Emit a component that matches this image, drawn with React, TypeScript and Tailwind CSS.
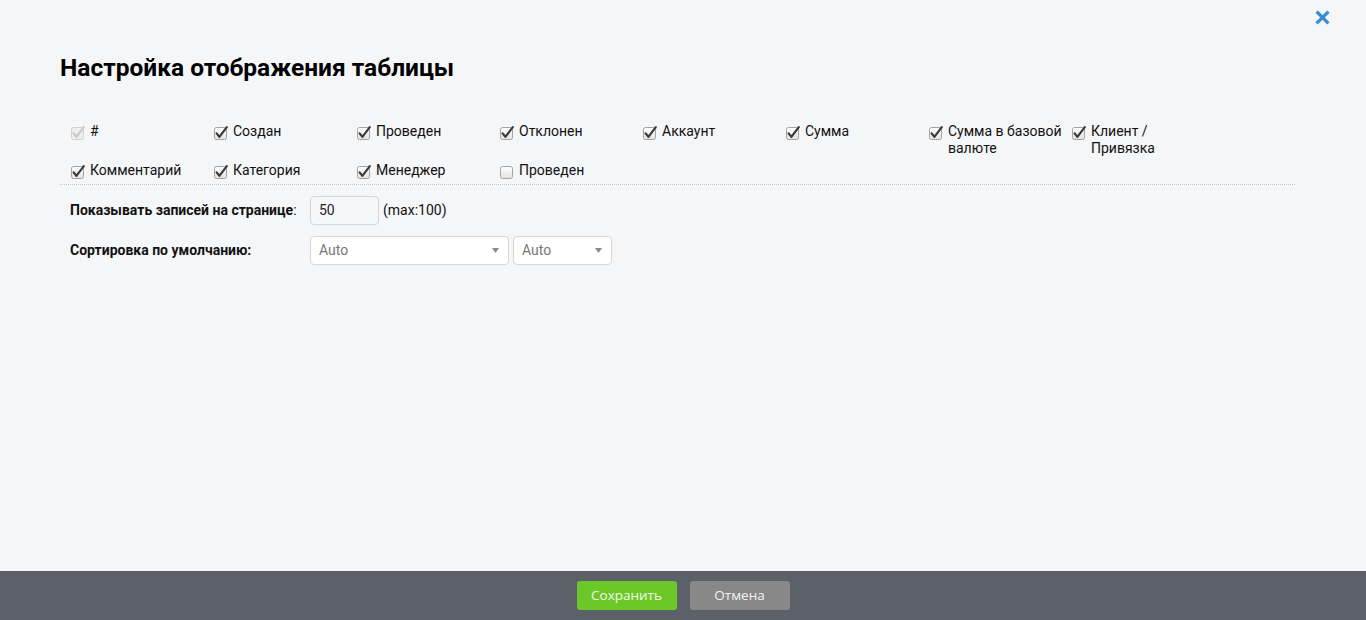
import { X } from 'lucide-react'

const columns = [
  { label: '#', checked: true, disabled: true },
  { label: 'Создан', checked: true },
  { label: 'Проведен', checked: true },
  { label: 'Отклонен', checked: true },
  { label: 'Аккаунт', checked: true },
  { label: 'Сумма', checked: true },
  { label: 'Сумма в базовой валюте', checked: true },
  { label: 'Клиент / Привязка', checked: true },
  { label: 'Комментарий', checked: true },
  { label: 'Категория', checked: true },
  { label: 'Менеджер', checked: true },
  { label: 'Проведен', checked: false },
]

// checkbox drawn the way the old browser theme renders it
const Checkbox = ({ checked, disabled }: { checked: boolean, disabled?: boolean }) => (
  <svg width="14" height="14" viewBox="0 0 14 14" className="shrink-0 overflow-visible mt-[5px] ml-[1px]">
    <defs>
      <linearGradient id="cbg" x1="0" y1="0" x2="0" y2="1">
        <stop offset="0" stopColor="#ffffff" />
        <stop offset="1" stopColor="#e2e2e2" />
      </linearGradient>
    </defs>
    <rect x="0.5" y="1.5" width="12" height="12" rx="2" fill={disabled ? '#eeeeee' : 'url(#cbg)'} stroke={disabled ? '#d0d0d0' : '#a3a3a3'} />
    {checked && (
      <path d="M2.6 7.4 L5.4 10.8 L12.8 1.2" fill="none" stroke={disabled ? '#c8c8c8' : '#3a3a3a'} strokeWidth="2.2" strokeLinecap="round" strokeLinejoin="round" />
    )}
  </svg>
)

const Select = ({ width }: { width: string }) => (
  <div className={`${width} h-[29px] bg-white border border-[#d6d6d6] rounded-[4px] flex items-center justify-between pl-[8px] pr-[9px] text-[14px] text-[#777]`}>
    <span>Auto</span>
    <svg width="7" height="5" viewBox="0 0 7 5"><path d="M0 0 H7 L3.5 5 Z" fill="#8a8a8a" /></svg>
  </div>
)

export default function App() {
  return (
    <div className="h-screen flex flex-col bg-[#f5f6f8] text-[#111] font-['Roboto',sans-serif]">
      <div className="flex-1 relative px-[60px]">
        <button className="absolute right-[34px] top-[8px] text-[#3a8fd3]">
          <X size={19} strokeWidth={4.2} strokeLinecap="square" />
        </button>

        <h1 className="pt-[52px] text-[24.5px] leading-[32px] font-bold text-black">Настройка отображения таблицы</h1>

        <div className="mt-[37px] w-[1235px]">
          <div className="px-[10px] pb-[5px] border-b border-dotted border-[#c4c4c4] grid grid-cols-[repeat(8,143px)] gap-y-[3px]">
            {columns.map((c, i) => (
              <label key={i} className="flex items-start gap-[5px] text-[14px] leading-[17px] text-[#111]">
                <Checkbox checked={c.checked} disabled={c.disabled} />
                <span className="mt-[2px]">{c.label}</span>
              </label>
            ))}
          </div>

          <div className="px-[10px] pt-[11px] flex flex-col gap-[11px] text-[14px]">
            <div className="flex items-center">
              <div className="w-[240px]"><span className="font-bold">Показывать записей на странице</span>:</div>
              <div className="w-[69px] h-[29px] border border-[#d6d6d6] rounded-[4px] bg-[#f6f7f9] flex items-center pl-[8px] text-[14px] text-[#222]">50</div>
              <span className="ml-[4px] text-[14px]">(max:100)</span>
            </div>
            <div className="flex items-center">
              <div className="w-[240px] font-bold">Сортировка по умолчанию:</div>
              <Select width="w-[199px]" />
              <div className="w-[4px]" />
              <Select width="w-[99px]" />
            </div>
          </div>
        </div>
      </div>

      <div className="h-[49px] bg-[#5b6069] flex justify-center items-start pt-[10px] gap-[13px] font-['Open_Sans',sans-serif] text-[13.5px]">
        <button className="w-[100px] h-[29px] rounded-[3px] bg-[#6cc826] text-[#f2f8ec]">Сохранить</button>
        <button className="w-[100px] h-[29px] rounded-[3px] bg-[#888888] text-[#f2f2f2]">Отмена</button>
      </div>
    </div>
  )
}
